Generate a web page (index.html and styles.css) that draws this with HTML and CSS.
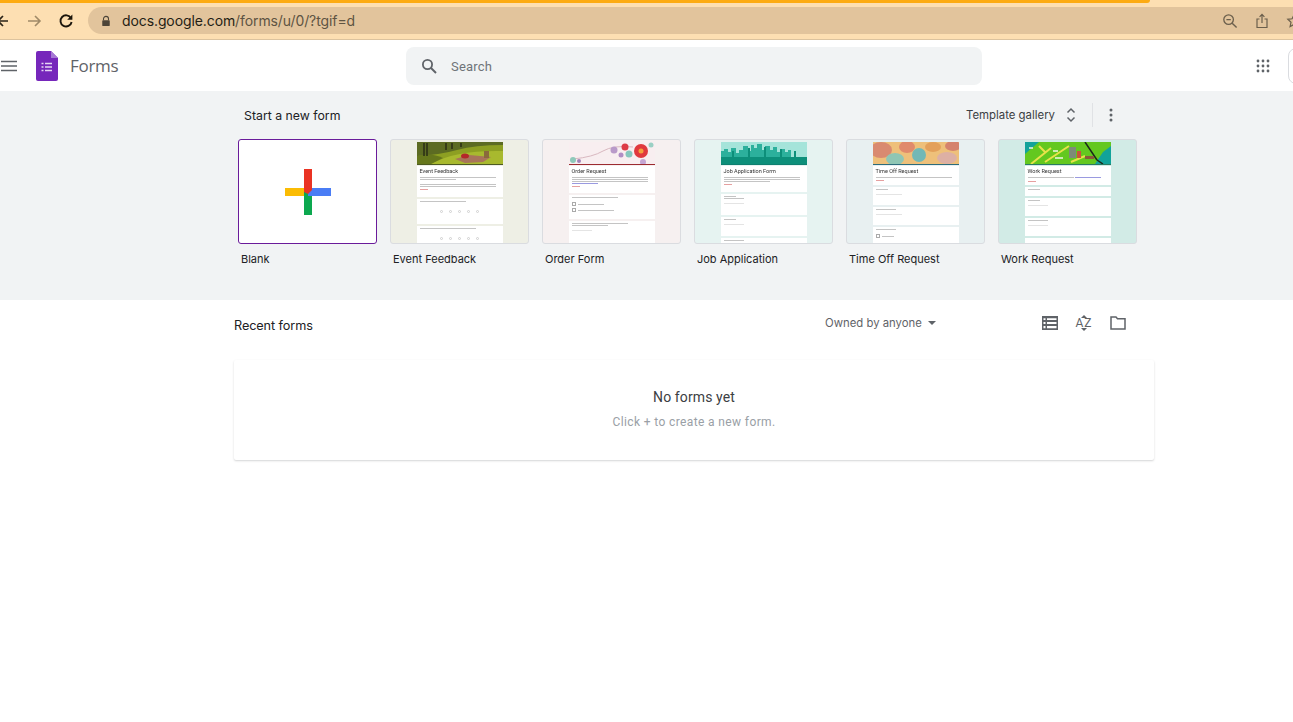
FILE: index.html
```html
<!DOCTYPE html>
<html lang="en">
<head>
    <meta charset="UTF-8">
    <title>Google Forms</title>
    <link rel="stylesheet" href="styles.css">
</head>
<body>

    <!--browser toolbar-->
    <div class="browser">
        <div class="load"></div>
        <div class="toolbar">
            <svg class="nav back" viewBox="0 0 16 16"><path d="M12 8H2M7 3L2 8l5 5" fill="none" stroke="#2b2418" stroke-width="1.7"/></svg>
            <svg class="nav fwd" viewBox="0 0 16 16"><path d="M2 8h12M9 3l5 5-5 5" fill="none" stroke="#a08a68" stroke-width="1.6"/></svg>
            <svg class="nav reload" viewBox="0 0 16 16"><path d="M13 5.2A5.6 5.6 0 1 0 13.6 9" fill="none" stroke="#1c160c" stroke-width="1.9"/><path d="M14.4 1.6v5.2H9.2z" fill="#1c160c"/></svg>
            <div class="omnibox">
                <svg class="lock" viewBox="0 0 12 14"><path d="M3 6V4.4a3 3 0 0 1 6 0V6" fill="none" stroke="#4c4438" stroke-width="1.3"/><rect x="1.5" y="6" width="9" height="7" rx="1" fill="#4c4438"/></svg>
                <div class="url"><span class="host">docs.google.com</span>/forms/u/0/?tgif=d</div>
                <svg class="omni-icon zoomout" viewBox="0 0 16 16"><circle cx="6.6" cy="6.6" r="4.8" fill="none" stroke="#6b5f4c" stroke-width="1.3"/><path d="M4.4 6.6h4.4M10.2 10.2l4.4 4.4" fill="none" stroke="#6b5f4c" stroke-width="1.4"/></svg>
                <svg class="omni-icon share" viewBox="0 0 16 16"><path d="M5.5 6H3v8.5h10V6h-2.5M8 10V1.5M5.6 3.8L8 1.4l2.4 2.4" fill="none" stroke="#6b5f4c" stroke-width="1.2"/></svg>
                <svg class="omni-icon star" viewBox="0 0 16 16"><path d="M8 1.8l1.9 4 4.3.5-3.2 3 .9 4.3L8 11.4l-3.900 2.200.9-4.300-3.200-3 4.300-.5z" fill="none" stroke="#6b5f4c" stroke-width="1.2"/></svg>
            </div>
        </div>
    </div>

    <!--forms header-->
    <header class="header">
        <svg class="menu" viewBox="0 0 16 12"><path d="M0 1.500h16M0 6h16M0 10.500h16" stroke="#5f6368" stroke-width="1.400"/></svg>
        <svg class="logo" viewBox="0 0 22 30">
            <path d="M2 0h13l7 7v21a2 2 0 0 1-2 2H2a2 2 0 0 1-2-2V2a2 2 0 0 1 2-2z" fill="#7627bb"/>
            <path d="M15 0l7 7h-7z" fill="#a578d4"/>
            <path d="M9 12.500h7M9 16h7M9 19.500h7" stroke="#e6d7f4" stroke-width="1.400"/>
            <path d="M5.500 12.500h2M5.500 16h2M5.500 19.500h2" stroke="#e6d7f4" stroke-width="1.400"/>
        </svg>
        <div class="product">Forms</div>
        <div class="search">
            <svg class="search-icon" viewBox="0 0 16 16"><circle cx="6.500" cy="6.500" r="4.600" fill="none" stroke="#5f6368" stroke-width="1.800"/><path d="M10 10l5 5" stroke="#5f6368" stroke-width="1.900"/></svg>
            <span class="search-text">Search</span>
        </div>
        <svg class="apps" viewBox="0 0 14 14" fill="#5f6368">
            <circle cx="2" cy="2" r="1.400"/><circle cx="7" cy="2" r="1.400"/><circle cx="12" cy="2" r="1.400"/>
            <circle cx="2" cy="7" r="1.400"/><circle cx="7" cy="7" r="1.400"/><circle cx="12" cy="7" r="1.400"/>
            <circle cx="2" cy="12" r="1.400"/><circle cx="7" cy="12" r="1.400"/><circle cx="12" cy="12" r="1.400"/>
        </svg>
        <div class="account"></div>
    </header>

    <!--template area-->
    <section class="templates">
        <div class="templates-head">
            <div class="start">Start a new form</div>
            <div class="gallery">Template gallery</div>
            <svg class="unfold" viewBox="0 0 10 16"><path d="M1.500 5.500L5 2l3.500 3.500M1.500 10.500L5 14l3.500-3.500" fill="none" stroke="#5f6368" stroke-width="1.500"/></svg>
            <div class="divider"></div>
            <svg class="more" viewBox="0 0 4 14" fill="#5f6368"><circle cx="2" cy="2" r="1.500"/><circle cx="2" cy="7" r="1.500"/><circle cx="2" cy="12" r="1.500"/></svg>
        </div>

        <div class="cards">
            <div class="card">
                <div class="thumb blank">
                    <svg class="plus" viewBox="0 0 46 46">
                        <rect x="0" y="19" width="23" height="8" fill="#fbbc04"/>
                        <rect x="19" y="23" width="8" height="23" fill="#0ca84f"/>
                        <rect x="23" y="19" width="23" height="8" fill="#4a7df5"/>
                        <path d="M19 0h8v21l-4 4-4-2z" fill="#ea3323"/>
                    </svg>
                </div>
                <div class="name">Blank</div>
            </div>

            <div class="card">
                <div class="thumb t-event">
                    <div class="sheet">
                        <svg class="banner" viewBox="0 0 86 22" preserveAspectRatio="none">
                            <rect width="86" height="22" fill="#8d9f22"/>
                            <path d="M0 0h86v3q-28 0-46 5T0 14z" fill="#5c6b22"/>
                            <path d="M14 22q24-14 72-13v13z" fill="#a8b92e"/>
                            <path d="M0 14q14-4 26 2L14 22H0z" fill="#66771c"/>
                            <path d="M38 17l14-4 22 2-8 5-18 1z" fill="#a8745a"/>
                            <ellipse cx="48" cy="14" rx="4" ry="2.500" fill="#b3282a"/>
                            <rect x="67" y="9" width="5" height="7" fill="#8a6a3c"/>
                            <path d="M7 1v13M10 1v13M29 1v7M35 1v6M44 1v4" stroke="#2a2e14" stroke-width="1.500"/>
                        </svg>
                        <div class="rule r-event"></div>
                        <div class="block b31">
                            <div class="ttl">Event Feedback</div>
                            <div class="ln w9"></div><div class="ln w4"></div>
                            <div class="ln w9 gap"></div><div class="ln w9"></div>
                            <div class="req"></div>
                        </div>
                        <div class="block b25">
                            <div class="ln w5"></div>
                            <div class="scale"><i></i><i></i><i></i><i></i><i></i></div>
                        </div>
                        <div class="block b25">
                            <div class="ln w6"></div>
                            <div class="scale"><i></i><i></i><i></i><i></i><i></i></div>
                        </div>
                    </div>
                </div>
                <div class="name">Event Feedback</div>
            </div>

            <div class="card">
                <div class="thumb t-order">
                    <div class="sheet">
                        <svg class="banner" viewBox="0 0 86 22" preserveAspectRatio="none">
                            <rect width="86" height="22" fill="#f8eef0"/>
                            <path d="M4 17q20-2 30-8t30-4" fill="none" stroke="#d9b8c0" stroke-width="1"/>
                            <circle cx="72" cy="9" r="7" fill="#e0393e"/><circle cx="72" cy="9" r="2.500" fill="#f4a13c"/>
                            <circle cx="56" cy="5" r="3.500" fill="#dd3b46"/>
                            <circle cx="45" cy="8" r="3.500" fill="#b99ac9"/><circle cx="60" cy="12" r="3.500" fill="#86c7bd"/>
                            <circle cx="52" cy="13" r="2.500" fill="#b08ec4"/><circle cx="82" cy="3" r="2.500" fill="#9ad0c4"/>
                            <circle cx="4" cy="18" r="3" fill="#8fc9ba"/><circle cx="10" cy="19" r="2" fill="#a283b8"/>
                            <circle cx="74" cy="20" r="3" fill="#c5a6d4"/>
                        </svg>
                        <div class="rule r-order"></div>
                        <div class="block b27">
                            <div class="ttl">Order Request</div>
                            <div class="ln w9"></div><div class="ln w9"></div><div class="ln w9"></div><div class="ln w3 link"></div>
                            <div class="req"></div>
                        </div>
                        <div class="block b24">
                            <div class="ln w5"></div>
                            <div class="opt gap"><i></i><div class="ln w3"></div></div>
                            <div class="opt"><i></i><div class="ln w4"></div></div>
                        </div>
                        <div class="block b24">
                            <div class="ln w6"></div><div class="ln w4"></div>
                            <div class="ln w2 gap faint"></div>
                        </div>
                    </div>
                </div>
                <div class="name">Order Form</div>
            </div>

            <div class="card">
                <div class="thumb t-job">
                    <div class="sheet">
                        <svg class="banner" viewBox="0 0 86 22" preserveAspectRatio="none">
                            <rect width="86" height="22" fill="#a5e4da"/>
                            <path d="M0 22V9h3V7h4v3h3V6h5v5h3V8h4V4h5v5h3V3h3v3h3V2h5v6h3V4h5v4h3V5h4v5h3V7h5v3h3V8h3v14z" fill="#2cb09c"/>
                            <path d="M0 22v-7h86v7z" fill="#0d8f7a"/>
                            <path d="M12 15V9M28 15V6M44 15V5M60 15V7M74 15V9" stroke="#0d8f7a" stroke-width="2"/>
                        </svg>
                        <div class="rule r-job"></div>
                        <div class="block b26">
                            <div class="ttl">Job Application Form</div>
                            <div class="ln w9"></div><div class="ln w9"></div><div class="ln w5"></div>
                            <div class="req"></div>
                        </div>
                        <div class="block b21">
                            <div class="ln w1"></div><div class="ln w2"></div>
                            <div class="ln w2 gap faint"></div>
                        </div>
                        <div class="block b19">
                            <div class="ln w1"></div>
                            <div class="ln w2 gap faint"></div>
                        </div>
                        <div class="block b19">
                            <div class="ln w2"></div>
                        </div>
                    </div>
                </div>
                <div class="name">Job Application</div>
            </div>

            <div class="card">
                <div class="thumb t-time">
                    <div class="sheet">
                        <svg class="banner" viewBox="0 0 86 22" preserveAspectRatio="none">
                            <rect width="86" height="22" fill="#eec07a"/>
                            <ellipse cx="8" cy="8" rx="11" ry="8" fill="#d98a70"/>
                            <ellipse cx="22" cy="17" rx="9" ry="6" fill="#8fc6b4"/>
                            <ellipse cx="34" cy="5" rx="8" ry="6" fill="#e08a6c"/>
                            <ellipse cx="46" cy="13" rx="7" ry="7" fill="#72b8b6"/>
                            <ellipse cx="60" cy="5" rx="8" ry="5" fill="#e3a05a"/>
                            <ellipse cx="74" cy="16" rx="10" ry="6" fill="#ddb0a4"/>
                            <ellipse cx="80" cy="4" rx="8" ry="5" fill="#d5836d"/>
                        </svg>
                        <div class="rule r-time"></div>
                        <div class="block b19">
                            <div class="ttl">Time Off Request</div>
                            <div class="ln w9"></div>
                            <div class="req"></div>
                        </div>
                        <div class="block b18">
                            <div class="ln w1"></div>
                            <div class="ln w3 gap faint"></div>
                        </div>
                        <div class="block b18">
                            <div class="ln w2"></div>
                            <div class="ln w3 gap faint"></div>
                        </div>
                        <div class="block b18">
                            <div class="ln w2"></div>
                            <div class="opt gap"><i></i><div class="ln w1"></div></div>
                        </div>
                    </div>
                </div>
                <div class="name">Time Off Request</div>
            </div>

            <div class="card">
                <div class="thumb t-work">
                    <div class="sheet">
                        <svg class="banner" viewBox="0 0 86 22" preserveAspectRatio="none">
                            <rect width="86" height="22" fill="#63c81f"/>
                            <path d="M0 0h14L0 12zM70 22l8-12 8-6v18z" fill="#12a39a"/>
                            <path d="M6 22L26 6M20 20L44 4M46 20l14-6M14 4l6 6" stroke="#e7e24a" stroke-width="2"/>
                            <path d="M60 0l12 18M72 18l6 4" stroke="#1b2a1a" stroke-width="1.500"/>
                            <rect x="44" y="5" width="7" height="11" fill="#7d8b78"/><rect x="52" y="9" width="4" height="7" fill="#c8553a"/>
                            <rect x="60" y="14" width="9" height="3" fill="#8a5a3a"/>
                            <path d="M30 16h8M4 6h4M28 9h5" stroke="#f2f7e6" stroke-width="1.500"/>
                        </svg>
                        <div class="rule r-work"></div>
                        <div class="block b19">
                            <div class="ttl">Work Request</div>
                            <div class="mix"><div class="ln w5"></div><div class="ln w3 link"></div></div>
                            <div class="req"></div>
                        </div>
                        <div class="block b9"><div class="ln w1"></div></div>
                        <div class="block b18">
                            <div class="ln w1"></div>
                            <div class="ln w2 gap faint"></div>
                        </div>
                        <div class="block b18">
                            <div class="ln w2"></div>
                            <div class="ln w2 gap faint"></div>
                        </div>
                        <div class="block b18"></div>
                    </div>
                </div>
                <div class="name">Work Request</div>
            </div>
        </div>
    </section>

    <!--recent forms-->
    <section class="recent">
        <div class="recent-head">
            <div class="recent-title">Recent forms</div>
            <div class="owner">Owned by anyone</div>
            <div class="caret"></div>
            <svg class="tool list" viewBox="0 0 16 14"><path d="M0 0h16v14H0z" fill="#5f6368"/><path d="M5 2.200h9.500v1.800H5zM5 6h9.500v1.900H5zM5 9.900h9.500v2.300H5zM1.500 2.200H3.500v1.800H1.500zM1.500 6H3.500v1.900H1.500zM1.500 9.900H3.500v2.300H1.500z" fill="#fff"/></svg>
            <div class="sort">
                <svg class="sort-mark" viewBox="0 0 6 3"><path d="M3 0l3 3H0z" fill="#5f6368"/></svg>
                <div class="sort-text">AZ</div>
                <svg class="sort-mark" viewBox="0 0 6 3"><path d="M3 3L0 0h6z" fill="#5f6368"/></svg>
            </div>
            <svg class="tool folder" viewBox="0 0 16 14"><path d="M1 1h5l1.500 1.800H15V13H1z" fill="none" stroke="#5f6368" stroke-width="1.500"/></svg>
        </div>
        <div class="empty">
            <div class="empty-title">No forms yet</div>
            <div class="empty-text">Click + to create a new form.</div>
        </div>
    </section>

</body>
</html>
```

FILE: styles.css
```css
body{margin:0;height:722px;overflow:hidden;background:#fff;font-family:Roboto,"Liberation Sans",sans-serif;}

/*browser toolbar*/
.browser{
    height: 40px;
    background: #fddfb2;
    border-bottom: 1px solid #dcc39e;
    box-sizing: border-box;
}
.load{
    width: 1150px;
    height: 3px;
    background: #fdab12;
    border-radius: 0 0 4px 0;
}
.toolbar{
    display: flex;
    align-items: center;
    height: 27px;
    margin-top: 4px;
}
.nav{
    flex: none;
    width: 16px;
    height: 16px;
}
.back{margin-left: -4px;}
.fwd{margin-left: 14px;}
.reload{margin-left: 16px;}
.omnibox{
    flex: 1;
    display: flex;
    align-items: center;
    height: 27px;
    margin-left: 14px;
    background: #e2c49c;
    border-radius: 14px 0 0 14px;
}
.lock{
    width: 10px;
    height: 12px;
    margin-left: 13px;
}
.url{
    flex: 1;
    margin-left: 11px;
    font: 14px Inter,"Liberation Sans",sans-serif;
    letter-spacing: -.1px;
    color: #5e5443;
}
.host{color: #241e14;}
.omni-icon{
    flex: none;
    width: 16px;
    height: 16px;
}
.zoomout{margin-right: 16px;}
.share{margin-right: 16px;}
.star{margin-right: -9px;}

/*forms header*/
.header{
    display: flex;
    align-items: center;
    height: 51px;
    background: #fff;
}
.header > *{flex: none;}
.menu{
    width: 16px;
    height: 12px;
    margin-left: 1px;
}
.logo{
    width: 22px;
    height: 30px;
    margin-left: 19px;
}
.product{
    width: 336px;
    margin-left: 12px;
    font: 17px "Open Sans",Roboto,sans-serif;
    letter-spacing: -.3px;
    color: #5f6368;
}
.search{
    display: flex;
    align-items: center;
    width: 576px;
    height: 38px;
    background: #f1f3f4;
    border-radius: 8px;
    font-size: 13px;
    letter-spacing: .2px;
    color: #6f7378;
}
.search-icon{
    width: 16px;
    height: 16px;
    margin: 0 14px 0 15px;
}
.search-text{padding-top: 2px;}
.apps{
    width: 14px;
    height: 14px;
    margin-left: 274px;
}
.account{
    width: 40px;
    height: 36px;
    margin-left: 18px;
    border: 1px solid #dadce0;
    border-radius: 8px;
    box-sizing: border-box;
}

/*templates*/
.templates{
    height: 209px;
    padding-left: 238px;
    box-sizing: border-box;
    background: #f1f3f4;
}
.templates-head{
    display: flex;
    align-items: center;
    width: 875px;
    height: 48px;
}
.start{
    flex: 1;
    margin-left: 6px;
    font: 12.300px Inter,Roboto,sans-serif;
    color: #202124;
}
.gallery{
    font: 11.400px Inter,Roboto,sans-serif;
    color: #3c4043;
}
.unfold{
    width: 10px;
    height: 16px;
    margin-left: 11px;
}
.divider{
    width: 1px;
    height: 24px;
    margin-left: 16px;
    background: #e0e2e5;
}
.more{
    width: 4px;
    height: 14px;
    margin-left: 16px;
}
.cards{
    display: flex;
    gap: 13px;
}
.card{width: 139px;}
.thumb{
    display: flex;
    justify-content: center;
    height: 105px;
    box-sizing: border-box;
    border: 1px solid #dadce0;
    border-radius: 3px;
    overflow: hidden;
}
.blank{
    align-items: center;
    background: #fff;
    border-color: #6a1b9a;
}
.plus{
    width: 46px;
    height: 46px;
}
.t-event{background: #eeefe5;}
.t-order{background: #f6f0f0;}
.t-job{background: #e6f3f1;}
.t-time{background: #e8f0f1;}
.t-work{background: #d2ebe6;}
.sheet{
    display: flex;
    flex-direction: column;
    flex: none;
    width: 86px;
    padding-top: 2px;
    filter: blur(.35px);
}
.banner{
    display: block;
    flex: none;
    width: 86px;
    height: 22px;
}
.rule{flex: none;height: 1px;margin-bottom: 1px;}
.r-event{background: #4d5a22;}
.r-order{background: #9c2a30;}
.r-job{background: #0f7f70;}
.r-time{background: #2c6b7c;}
.r-work{background: #2b7a62;}
.block{
    flex: none;
    margin-bottom: 2px;
    padding: 2px 3px;
    box-sizing: border-box;
    background: #fff;
    overflow: hidden;
}
.b31{height: 31px;}
.b27{height: 27px;}
.b26{height: 26px;}
.b25{height: 25px;}
.b24{height: 24px;}
.b21{height: 21px;}
.b19{height: 19px;}
.b18{height: 18px;}
.b9{height: 9px;}
.ttl{
    height: 7px;
    margin-bottom: 2px;
    font-size: 5.500px;
    line-height: 7px;
    white-space: nowrap;
    color: #333;
}
.ln{
    height: 1px;
    margin-bottom: 1px;
    background: #c4c4c4;
}
.w1{width: 12px;}
.w2{width: 20px;}
.w3{width: 26px;}
.w4{width: 36px;}
.w5{width: 46px;}
.w6{width: 56px;}
.w9{width: 76px;}
.gap{margin-top: 4px;}
.faint{background: #e4e4e4;}
.link{background: #9a9ae0;}
.req{
    width: 8px;
    height: 1px;
    margin-top: 2px;
    background: #e5a0a0;
}
.scale{
    display: flex;
    justify-content: center;
    gap: 6px;
    margin-top: 8px;
}
.scale i{
    width: 3px;
    height: 3px;
    border: 1px solid #d0d0d0;
    border-radius: 50%;
    box-sizing: border-box;
}
.opt{
    display: flex;
    align-items: center;
    gap: 2px;
    margin-bottom: 2px;
}
.opt i{
    width: 2px;
    height: 2px;
    border: 1px solid #aaa;
}
.opt .ln{margin: 0;}
.mix{display: flex;gap: 1px;}
.name{
    margin: 8px 0 0 3px;
    font: 11px Inter,Roboto,sans-serif;
    color: #202124;
}

/*recent*/
.recent{
    padding-left: 234px;
}
.recent-head{
    display: flex;
    align-items: center;
    height: 46px;
}
.recent-head > *{flex: none;}
.recent-title{
    width: 591px;
    padding-top: 4px;
    font: 12.700px Inter,Roboto,sans-serif;
    letter-spacing: -.1px;
    color: #202124;
}
.owner{
    font: 11.350px Inter,Roboto,sans-serif;
    white-space: nowrap;
    color: #5f6368;
}
.caret{
    width: 0;
    height: 0;
    margin-left: 6px;
    border: 4px solid transparent;
    border-top: 4px solid #5f6368;
    border-bottom: 0;
}
.tool{
    width: 16px;
    height: 14px;
}
.list{margin-left: 106px;}
.sort{
    display: flex;
    flex-direction: column;
    align-items: center;
    width: 16px;
    margin-left: 18px;
}
.sort-mark{width: 6px;height: 3px;}
.sort-text{
    font-size: 12px;
    line-height: 10px;
    letter-spacing: .8px;
    color: #5f6368;
}
.folder{margin-left: 18px;}
.empty{
    width: 920px;
    height: 100px;
    margin-top: 14px;
    padding-top: 28px;
    box-sizing: border-box;
    background: #fff;
    border-radius: 2px;
    box-shadow: 0 1px 2px rgba(60,64,67,.22);
    text-align: center;
}
.empty-title{
    font-size: 14px;
    line-height: 18px;
    letter-spacing: .1px;
    color: #3c4043;
}
.empty-text{
    margin-top: 8px;
    font-size: 12px;
    line-height: 16px;
    letter-spacing: .38px;
    color: #9aa0a6;
}
```
